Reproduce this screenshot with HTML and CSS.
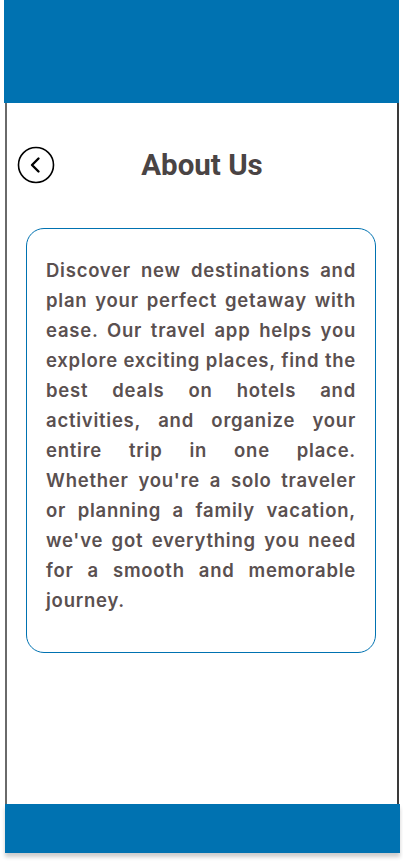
FILE: index.html
```html
<!DOCTYPE html>
<html lang="en">
<head>
<meta charset="utf-8">
<title>About Us</title>
<link rel="stylesheet" href="styles.css">
</head>
<body>
<div class="phone">
  <header class="topbar"></header>
  <main class="content">
    <div class="title-row">
      <button class="back" aria-label="Back">
        <svg width="38" height="38" viewBox="0 0 38 38">
          <circle cx="19" cy="19" r="17.5" fill="none" stroke="#000" stroke-width="1.6"/>
          <path d="M21.5 12.5 L15 19 L21.5 25.5" fill="none" stroke="#000" stroke-width="2.4" stroke-linecap="round" stroke-linejoin="round"/>
        </svg>
      </button>
      <h1 class="title">About Us</h1>
      <span class="spacer"></span>
    </div>
    <section class="card">
      <p class="about-text">Discover new destinations and plan your perfect getaway with ease. Our travel app helps you explore exciting places, find the best deals on hotels and activities, and organize your entire trip in one place. Whether you're a solo traveler or planning a family vacation, we've got everything you need for a smooth and memorable journey.</p>
    </section>
  </main>
  <footer class="bottombar"></footer>
</div>
</body>
</html>
```
FILE: styles.css
```css
html, body {
  margin: 0;
  padding: 0;
  background: #ffffff;
}
.phone {
  width: 403px;
  height: 861px;
  overflow: hidden;
}
.topbar {
  margin-left: 4px;
  width: 395px;
  height: 103px;
  background: #0072b1;
}
.content {
  margin-left: 5px;
  width: 394px;
  height: 701px;
  box-sizing: border-box;
  border-left: 2px solid #6a6a6a;
  border-right: 2px solid #3a3a3a;
  padding-top: 43px;
}
.title-row {
  display: grid;
  grid-template-columns: 38px 1fr 38px;
  align-items: center;
  padding: 0 10px;
  height: 38px;
}
.back {
  width: 38px;
  height: 38px;
  padding: 0;
  margin: 0;
  border: 0;
  background: none;
  display: block;
}
.back svg { display: block; }
.title {
  margin: 0;
  text-align: center;
  font-family: Roboto, "Liberation Sans", sans-serif;
  font-weight: 700;
  font-size: 29.5px;
  line-height: 38px;
  color: #4a4444;
}
.card {
  margin: 44px 0 0 19px;
  width: 350px;
  height: 425px;
  box-sizing: border-box;
  border: 1px solid #0072b1;
  border-radius: 18px;
  padding: 26px 19px 0 19px;
}
.about-text {
  margin: 0;
  font-family: Inter, "Noto Sans", sans-serif;
  font-weight: 600;
  font-size: 18.5px;
  line-height: 30px;
  letter-spacing: 0.76px;
  text-align: justify;
  color: #5a5050;
}
.bottombar {
  margin-left: 5px;
  width: 395px;
  height: 49px;
  background: #0072b1;
  box-shadow: 0 4px 4px rgba(0, 0, 0, 0.2);
}
```
